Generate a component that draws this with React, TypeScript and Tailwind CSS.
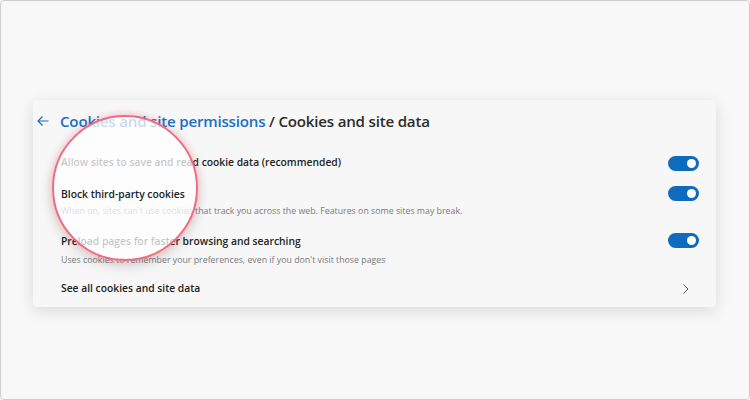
import React from 'react';

const font = { fontFamily: '"Open Sans", "Noto Sans", sans-serif' };

function Toggle() {
  return (
    <div className="w-[31px] h-[15px] rounded-full bg-[#0f6cbd] flex items-center justify-end pr-[3px]">
      <div className="w-[9px] h-[9px] rounded-full bg-white" />
    </div>
  );
}

export default function App() {
  return (
    <div
      className="w-[750px] h-[400px] border border-[#cdcdcd] rounded-[4px] bg-[#f8f8f8] pl-[32px] pt-[99px] text-[#222]"
      style={font}
    >
      <div className="relative w-[683px] h-[207px] bg-[#f7f7f7] rounded-[4px] shadow-[0_4px_16px_rgba(0,0,0,0.12)] pt-[9px]">
        {/* Header */}
        <div className="flex items-center h-[24px]">
          <div className="w-[27px] flex justify-start pl-[4px]">
            <svg width="12" height="12" viewBox="0 0 12 12" fill="none" stroke="#1a6fc4" strokeWidth="1.2">
              <path d="M11.5 6H1M5.5 1.5L1 6L5.5 10.5" />
            </svg>
          </div>
          <h1 className="text-[15.1px] font-semibold tracking-[-0.2px]">
            <span className="text-[#1a6fc4]">Cookies and site permissions</span>
            <span className="text-[#2b2b2b]"> / Cookies and site data</span>
          </h1>
        </div>

        <div className="pl-[28px] pr-[17px]">
          {/* Row 1 */}
          <div className="flex items-center justify-between h-[28px] mt-[16px]">
            <span className="text-[10.3px] font-semibold">Allow sites to save and read cookie data (recommended)</span>
            <Toggle />
          </div>

          {/* Row 2 */}
          <div className="flex items-start justify-between mt-[8px]">
            <div>
              <div className="relative z-20 text-[10.3px] font-semibold leading-[18px]">Block third-party cookies</div>
              <div className="text-[8.8px] text-[#7a7a7a] leading-[14px] mt-[1px]">
                When on, sites can't use cookies that track you across the web. Features on some sites may break.
              </div>
            </div>
            <div className="pt-[1px]">
              <Toggle />
            </div>
          </div>

          {/* Row 3 */}
          <div className="flex items-start justify-between mt-[14px]">
            <div>
              <div className="text-[10.3px] font-semibold leading-[18px]">Preload pages for faster browsing and searching</div>
              <div className="text-[8.8px] text-[#7a7a7a] leading-[14px] mt-[3px]">
                Uses cookies to remember your preferences, even if you don't visit those pages
              </div>
            </div>
            <div className="pt-[1px]">
              <Toggle />
            </div>
          </div>

          {/* Row 4 */}
          <div className="flex items-center justify-between h-[22px] mt-[11px]">
            <span className="text-[10.3px] font-semibold">See all cookies and site data</span>
            <svg width="8" height="12" viewBox="0 0 8 12" fill="none" stroke="#555" strokeWidth="1" className="mr-[9px]">
              <path d="M1.5 1.5L6 6L1.5 10.5" />
            </svg>
          </div>
        </div>

        {/* Magnifier highlight */}
        <div className="absolute z-10 left-[19px] top-[15px] w-[146px] h-[146px] rounded-full bg-white/75 border-[2.5px] border-[#f06b80] shadow-[0_0_8px_rgba(240,90,110,0.35),0_6px_14px_rgba(0,0,0,0.12)]" />
      </div>
    </div>
  );
}
